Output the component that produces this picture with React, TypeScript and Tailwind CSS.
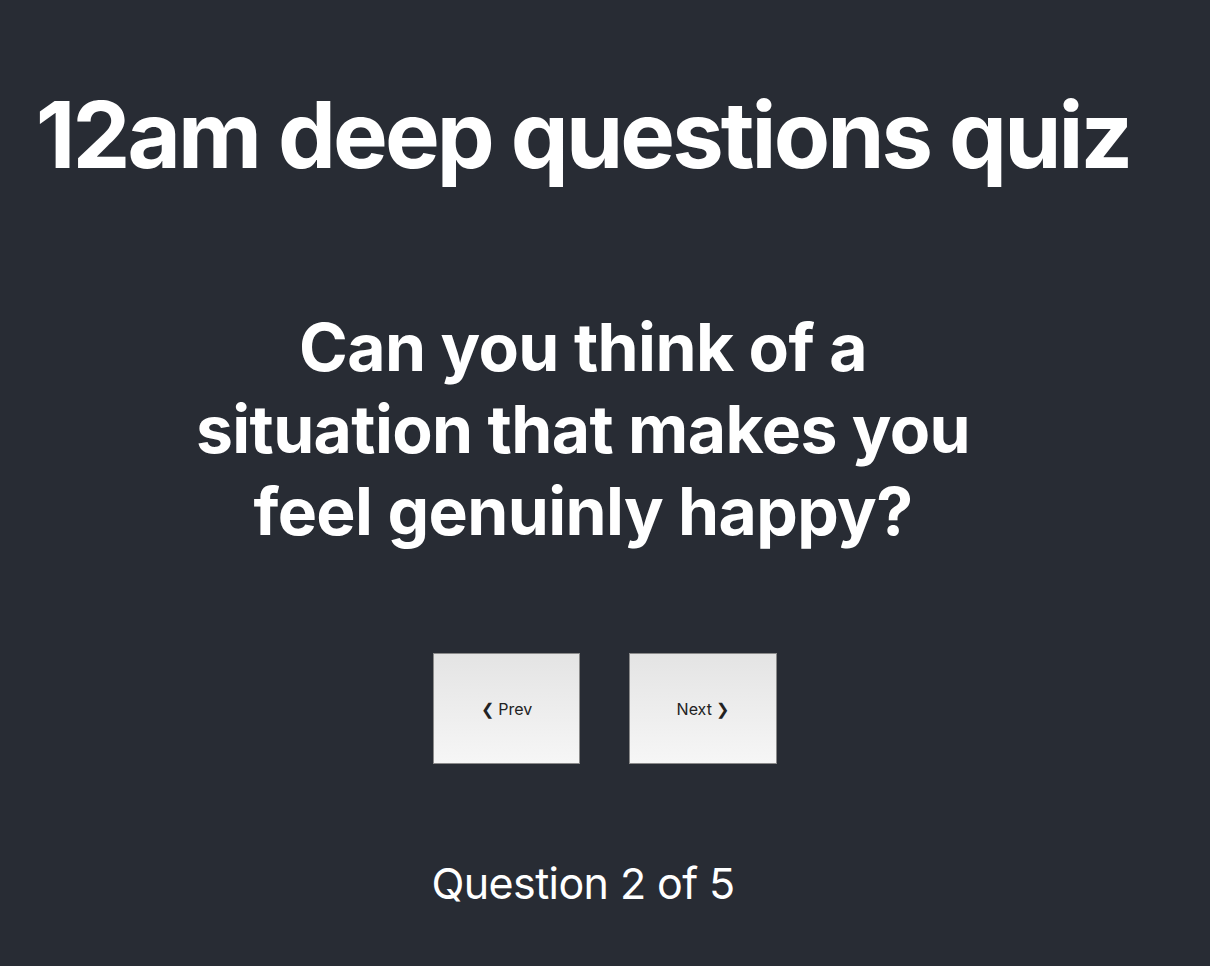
const font = { fontFamily: "Inter, 'Noto Sans', sans-serif" };

export default function App() {
  return (
    <div className="min-h-[966px] bg-[#282c34] text-white" style={font}>
      <div className="pr-[44px] text-center">
        <h1 className="whitespace-nowrap pt-[80px] text-[92px] font-bold leading-[1.2] tracking-[-2.9px]">
          12am deep questions quiz
        </h1>
        <h2 className="mt-[116px] text-[66px] font-bold leading-[82px] tracking-[-0.6px]">
          Can you think of a
          <br />
          situation that makes you
          <br />
          feel genuinly happy?
        </h2>
      </div>
      <div className="mt-[101px] flex justify-center gap-[49px]">
        <button className="h-[111px] w-[147px] border border-[#8a8a8a] bg-gradient-to-b from-[#e4e4e4] to-[#f6f6f6] text-[16px] text-[#222]">
          ❮ Prev
        </button>
        <button className="h-[111px] w-[148px] border border-[#8a8a8a] bg-gradient-to-b from-[#e4e4e4] to-[#f6f6f6] text-[16px] text-[#222]">
          Next ❯
        </button>
      </div>
      <p className="pr-[44px] pt-[87px] text-center text-[43px] tracking-[-0.6px]">Question 2 of 5</p>
    </div>
  );
}
